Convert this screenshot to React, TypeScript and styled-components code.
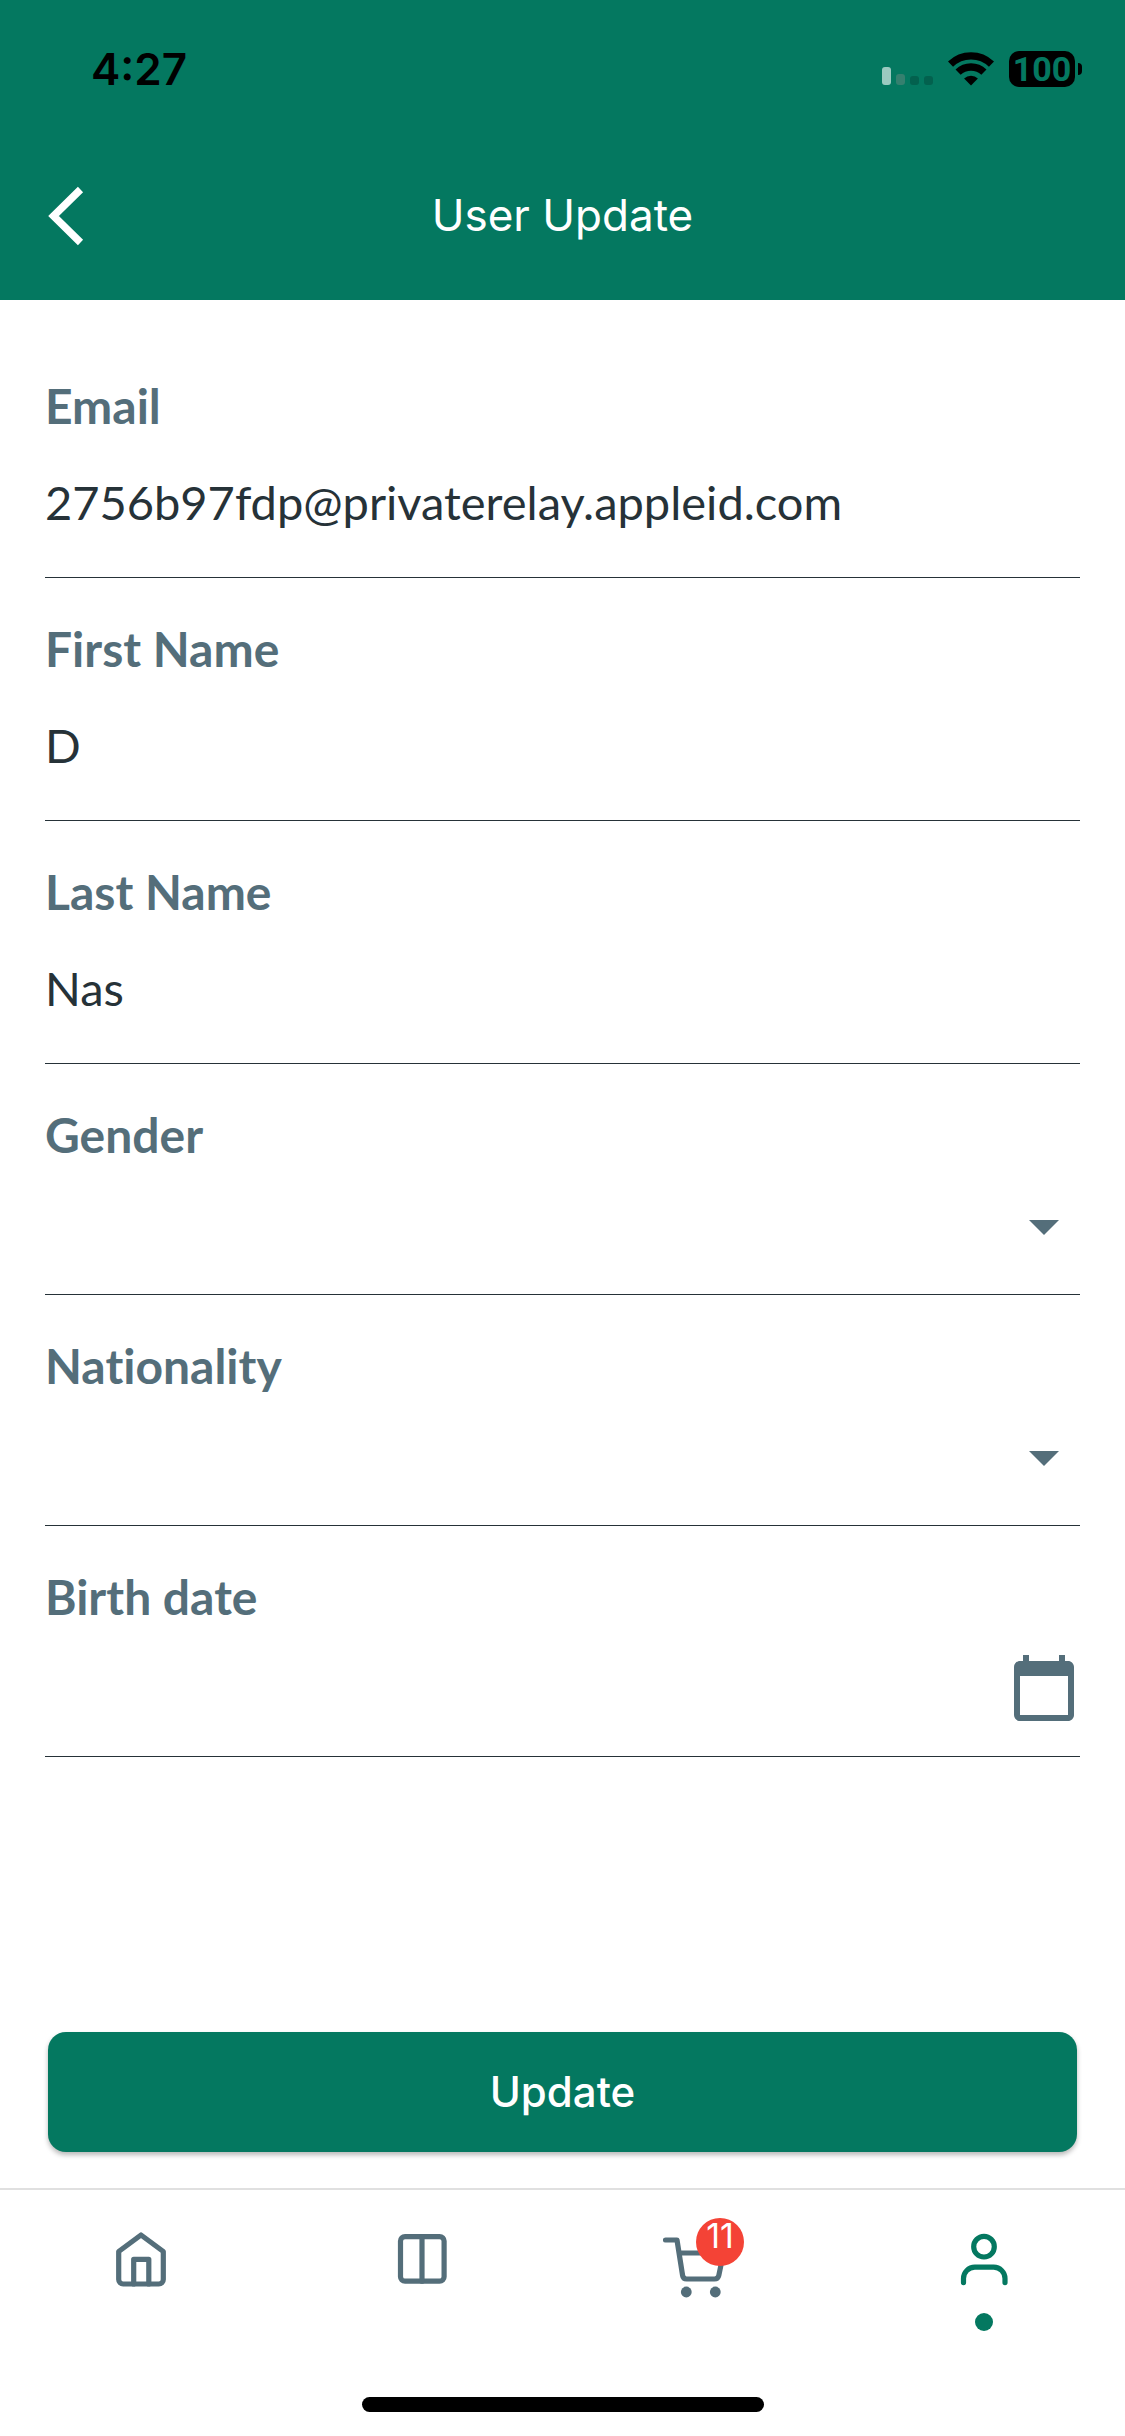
import React, { useState } from "react";
import styled, { createGlobalStyle } from "styled-components";

const green = "#047860";
const slate = "#546e7a";
const ink = "#263238";
const ui = `Inter, "Liberation Sans", sans-serif`;
const form = `Lato, "Liberation Sans", sans-serif`;

const GlobalStyle = createGlobalStyle`
  *, *::before, *::after { box-sizing: border-box; }
  body { margin: 0; background: #fff; color: ${ink}; font-family: ${ui}; }
  button, input, select { font: inherit; color: inherit; border: 0; padding: 0; margin: 0; background: none; border-radius: 0; }
  button { cursor: pointer; }
  svg { display: block; }
`;

const Screen = styled.div`
  display: flex;
  flex-direction: column;
  min-height: 100vh;
`;

const Header = styled.header`
  background: ${green};
`;

const StatusBar = styled.div`
  display: flex;
  align-items: center;
  justify-content: space-between;
  height: 132px;
  padding: 6px 43px 0 91px;
  color: #000;
`;

const Clock = styled.time`
  font-size: 44px;
  line-height: 52px;
  font-weight: 600;
`;

const StatusIcons = styled.div`
  display: flex;
  align-items: center;
  gap: 15px;
`;

const Battery = styled.div`
  display: flex;
  align-items: center;
  gap: 3px;
`;

const BatteryBody = styled.span`
  display: flex;
  align-items: center;
  justify-content: center;
  width: 66px;
  height: 36px;
  border-radius: 10px;
  background: #000;
  color: ${green};
  font-family: Roboto, "Liberation Sans", sans-serif;
  font-size: 34px;
  line-height: 36px;
  font-weight: 700;
`;

const BatteryNub = styled.span`
  width: 4px;
  height: 12px;
  border-radius: 0 4px 4px 0;
  background: #000;
`;

const TitleBar = styled.div`
  display: grid;
  grid-template-columns: 84px 1fr 84px;
  align-items: center;
  height: 168px;
  padding: 0 24px;
  color: #fff;
`;

const BackButton = styled.button`
  display: flex;
  align-items: center;
  justify-content: center;
  width: 84px;
  height: 84px;
`;

const Title = styled.h1`
  margin: 0;
  padding-bottom: 2px;
  text-align: center;
  font-size: 44px;
  line-height: 56px;
  font-weight: 400;
`;

const Form = styled.form`
  display: flex;
  flex-direction: column;
  flex: 1;
  padding: 35px 45px 36px;
  font-family: ${form};
  font-variant-ligatures: none;
`;

const FieldRow = styled.div`
  display: flex;
  flex-direction: column;
  padding-top: 44px;
  border-bottom: 1px solid ${ink};
`;

const Label = styled.label`
  align-self: flex-start;
  font-size: 48px;
  line-height: 54px;
  font-weight: 700;
  color: ${slate};
`;

const TextInput = styled.input`
  width: 100%;
  height: 144px;
  padding-bottom: 6px;
  font-size: 47px;
  outline: none;
`;

const Control = styled.div`
  display: grid;
  grid-template-columns: 1fr 72px;
  align-items: center;
  height: 132px;
  padding-bottom: 4px;
  color: ${slate};

  & > svg {
    grid-area: 1 / 2;
    pointer-events: none;
  }
`;

const Select = styled.select`
  grid-area: 1 / 1 / 2 / 3;
  height: 100%;
  appearance: none;
  font-size: 47px;
  color: ${ink};
  outline: none;
`;

const DateInput = styled.input`
  min-width: 0;
  height: 100%;
  font-size: 47px;
  color: ${ink};
  outline: none;
`;

const SubmitButton = styled.button`
  height: 120px;
  margin: auto 3px 0;
  padding-bottom: 2px;
  border-radius: 18px;
  background: ${green};
  color: #fff;
  font-family: ${ui};
  font-size: 42px;
  font-weight: 500;
  box-shadow: 0 3px 5px rgba(0, 0, 0, 0.28);
`;

const Footer = styled.footer`
  border-top: 2px solid #e0e0e0;
  padding: 30px 0 24px;
`;

const Tabs = styled.nav`
  display: grid;
  grid-template-columns: repeat(4, 1fr);
`;

const Tab = styled.a<{ $active?: boolean }>`
  display: flex;
  flex-direction: column;
  align-items: center;
  gap: 13px;
  color: ${(p) => (p.$active ? green : slate)};
  text-decoration: none;

  &::after {
    content: "";
    width: 18px;
    height: 18px;
    border-radius: 50%;
    background: ${(p) => (p.$active ? green : "transparent")};
  }
`;

const TabIcon = styled.span`
  position: relative;
  width: 80px;
  height: 80px;
`;

const Badge = styled.span`
  position: absolute;
  top: -2px;
  left: 33px;
  width: 48px;
  height: 48px;
  border-radius: 50%;
  background: #f44336;
  color: #fff;
  text-align: center;
  font-size: 34px;
  line-height: 36px;
`;

const HomeIndicator = styled.div`
  width: 402px;
  max-width: 60%;
  height: 15px;
  margin: 66px auto 0;
  border-radius: 8px;
  background: #000;
`;

const Stroked = ({ children }: { children: React.ReactNode }) => (
  <svg width="80" height="80" viewBox="0 0 80 80" fill="none" stroke="currentColor" strokeWidth="5.2" strokeLinecap="round" strokeLinejoin="round" aria-hidden="true">
    {children}
  </svg>
);

const SignalIcon = () => (
  <svg width="51" height="36" viewBox="0 0 51 36" aria-hidden="true">
    <rect x="0" y="16" width="9" height="18" rx="3" fill="#9bcac0" />
    <rect x="14" y="23" width="9" height="11" rx="3" fill="#35806f" />
    <rect x="28" y="25" width="9" height="9" rx="3" fill="#03614e" />
    <rect x="42" y="25" width="9" height="9" rx="3" fill="#03614e" />
  </svg>
);

const WifiIcon = () => (
  <svg width="46" height="36" viewBox="0 0 46 36" fill="none" stroke="#000" strokeWidth="7.4" aria-hidden="true">
    <path d="M2.5 13.2A29.5 29.5 0 0 1 43.5 13.2" />
    <path d="M10.1 21.2A18.5 18.5 0 0 1 35.9 21.2" />
    <path d="M23 34.5L16.1 27.4A10 10 0 0 1 29.9 27.4Z" fill="#000" stroke="none" />
  </svg>
);

const ArrowDown = () => (
  <svg width="72" height="72" viewBox="0 0 24 24" fill="currentColor" aria-hidden="true">
    <path d="M7 10l5 5 5-5z" />
  </svg>
);

const CalendarIcon = () => (
  <svg width="72" height="72" viewBox="0 0 24 24" fill="currentColor" aria-hidden="true">
    <path d="M20 3h-1V1h-2v2H7V1H5v2H4c-1.1 0-2 .9-2 2v16c0 1.1.9 2 2 2h16c1.1 0 2-.9 2-2V5c0-1.1-.9-2-2-2zm0 18H4V8h16v13z" />
  </svg>
);

const HouseIcon = () => (
  <Stroked>
    <path d="M40 15L62.3 31.5V59.5a4.5 4.5 0 0 1-4.5 4.5H22.2a4.5 4.5 0 0 1-4.5-4.5V31.5Z" />
    <path d="M32.7 64V39.3H47.8V64" />
  </Stroked>
);

const ColumnsIcon = () => (
  <Stroked>
    <rect x="18.5" y="16.6" width="43.6" height="44.6" rx="4.5" />
    <path d="M40 16.6V61.2" />
  </Stroked>
);

const CartIcon = () => (
  <Stroked>
    <path d="M2.5 20H14L19.6 55.5Q20.2 59 23.6 59H51.5Q55 59 55.8 55.5L60.5 33H16.3" />
    <circle cx="23.3" cy="72" r="5.4" fill="currentColor" stroke="none" />
    <circle cx="52.3" cy="72" r="5.4" fill="currentColor" stroke="none" />
  </Stroked>
);

const PersonIcon = () => (
  <Stroked>
    <circle cx="40" cy="26.7" r="10.3" />
    <path d="M19.5 62.6V58.5A11.3 11.3 0 0 1 30.8 47.2H49.7A11.3 11.3 0 0 1 61 58.5V62.6" />
  </Stroked>
);

const TextField = ({ id, label, type = "text", initial }: { id: string; label: string; type?: string; initial: string }) => {
  const [value, setValue] = useState(initial);
  return (
    <FieldRow>
      <Label htmlFor={id}>{label}</Label>
      <TextInput id={id} type={type} value={value} onChange={(e) => setValue(e.target.value)} />
    </FieldRow>
  );
};

const SelectField = ({ id, label, options }: { id: string; label: string; options: string[] }) => (
  <FieldRow>
    <Label htmlFor={id}>{label}</Label>
    <Control>
      <Select id={id} defaultValue="">
        <option value="" />
        {options.map((o) => (
          <option key={o}>{o}</option>
        ))}
      </Select>
      <ArrowDown />
    </Control>
  </FieldRow>
);

export default function App() {
  return (
    <Screen>
      <GlobalStyle />
      <Header>
        <StatusBar>
          <Clock>4:27</Clock>
          <StatusIcons>
            <SignalIcon />
            <WifiIcon />
            <Battery>
              <BatteryBody>100</BatteryBody>
              <BatteryNub />
            </Battery>
          </StatusIcons>
        </StatusBar>
        <TitleBar>
          <BackButton type="button" aria-label="Back">
            <svg width="36" height="60" viewBox="0 0 36 60" fill="none" stroke="#fff" strokeWidth="7.4" aria-hidden="true">
              <path d="M32.5 3.5L5.5 30L32.5 56.5" />
            </svg>
          </BackButton>
          <Title>User Update</Title>
        </TitleBar>
      </Header>

      <Form onSubmit={(e) => e.preventDefault()}>
        <TextField id="email" label="Email" type="email" initial="2756b97fdp@privaterelay.appleid.com" />
        <TextField id="first-name" label="First Name" initial="D" />
        <TextField id="last-name" label="Last Name" initial="Nas" />
        <SelectField id="gender" label="Gender" options={[]} />
        <SelectField id="nationality" label="Nationality" options={[]} />
        <FieldRow>
          <Label htmlFor="birth-date">Birth date</Label>
          <Control>
            <DateInput id="birth-date" type="text" />
            <CalendarIcon />
          </Control>
        </FieldRow>
        <SubmitButton type="submit">Update</SubmitButton>
      </Form>

      <Footer>
        <Tabs>
          <Tab href="#home" aria-label="Home">
            <TabIcon><HouseIcon /></TabIcon>
          </Tab>
          <Tab href="#catalog" aria-label="Catalog">
            <TabIcon><ColumnsIcon /></TabIcon>
          </Tab>
          <Tab href="#cart" aria-label="Cart">
            <TabIcon>
              <CartIcon />
              <Badge>11</Badge>
            </TabIcon>
          </Tab>
          <Tab href="#profile" aria-label="Profile" aria-current="page" $active>
            <TabIcon><PersonIcon /></TabIcon>
          </Tab>
        </Tabs>
        <HomeIndicator />
      </Footer>
    </Screen>
  );
}
